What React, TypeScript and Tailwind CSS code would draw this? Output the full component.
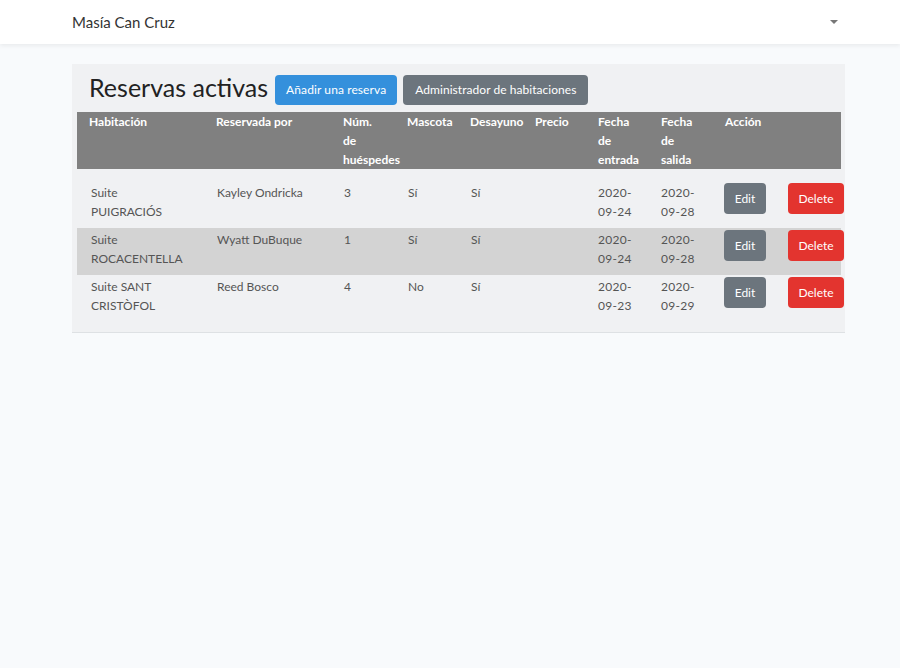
import React from "react";

const rows = [
  { hab: ["Suite", "PUIGRACIÓS"], por: "Kayley Ondricka", n: "3", m: "Sí", d: "Sí", p: "", e: ["2020-", "09-24"], s: ["2020-", "09-28"] },
  { hab: ["Suite", "ROCACENTELLA"], por: "Wyatt DuBuque", n: "1", m: "Sí", d: "Sí", p: "", e: ["2020-", "09-24"], s: ["2020-", "09-28"] },
  { hab: ["Suite SANT", "CRISTÒFOL"], por: "Reed Bosco", n: "4", m: "No", d: "Sí", p: "", e: ["2020-", "09-23"], s: ["2020-", "09-29"] },
];

const widths = ["w-[127px]", "w-[127px]", "w-[64px]", "w-[63px]", "w-[65px]", "w-[63px]", "w-[63px]", "w-[64px]", "w-[63px]", "w-[65px]"];

const headers: string[][] = [
  ["Habitación"],
  ["Reservada por"],
  ["Núm.", "de", "huéspedes"],
  ["Mascota"],
  ["Desayuno"],
  ["Precio"],
  ["Fecha", "de", "entrada"],
  ["Fecha", "de", "salida"],
  ["Acción"],
  [""],
];

export default function App() {
  return (
    <div className="min-h-[668px] bg-[#f8fafc] text-[#555]" style={{ fontFamily: "Lato, 'Noto Sans', sans-serif" }}>
      <nav className="h-[44px] bg-white shadow-[0_2px_4px_rgba(0,0,0,0.06)] flex items-center justify-between pl-[72px] pr-[62px]">
        <span className="text-[15px] text-[#333]">Masía Can Cruz</span>
        <span className="w-0 h-0 border-l-[4px] border-r-[4px] border-t-[4px] border-l-transparent border-r-transparent border-t-[#777]" />
      </nav>
      <div className="pt-[20px] pl-[72px]">
        <div className="w-[773px] bg-[#f0f1f3] border-b border-[#dee1e4] pt-[11px] pb-[10px] pl-[5px]">
          <div className="flex items-center h-[30px] mb-[7px] pl-[12px] gap-[6px]">
            <h1 className="text-[25px] text-[#222] leading-none mr-[1px] mt-[-6px]">Reservas activas</h1>
            <button className="h-[30px] px-[11px] rounded-[4px] bg-[#3490dc] text-white text-[12px] tracking-[0.1px]">Añadir una reserva</button>
            <button className="h-[30px] px-[12px] rounded-[4px] bg-[#6c757d] text-white text-[12px] tracking-[0.05px]">Administrador de habitaciones</button>
          </div>
          <table className="border-collapse text-[12px] leading-[19px] table-fixed w-[764px]">
            <thead>
              <tr className="bg-[#808080] text-white align-top">
                {headers.map((h, i) => (
                  <th key={i} className={`${widths[i]} text-left font-bold pl-[12px] pr-[2px] h-[57px] align-top`}>
                    {h.map((l, j) => (
                      <div key={j}>{l}</div>
                    ))}
                  </th>
                ))}
              </tr>
            </thead>
            <tbody>
              <tr><td colSpan={10} className="h-[12px] p-0" /></tr>
              {rows.map((r, i) => (
                <tr key={i} className={`${i === 1 ? "bg-[#d3d3d3]" : ""} align-top h-[47px]`}>
                  <td className="pl-[14px] pt-[2px]">{r.hab[0]}<br />{r.hab[1]}</td>
                  <td className="pl-[13px] pt-[2px]">{r.por}</td>
                  <td className="pl-[13px] pt-[2px]">{r.n}</td>
                  <td className="pl-[13px] pt-[2px]">{r.m}</td>
                  <td className="pl-[13px] pt-[2px]">{r.d}</td>
                  <td className="pl-[12px] pt-[2px]">{r.p}</td>
                  <td className="pl-[12px] pt-[2px] tracking-[0.3px]">{r.e[0]}<br />{r.e[1]}</td>
                  <td className="pl-[12px] pt-[2px] tracking-[0.3px]">{r.s[0]}<br />{r.s[1]}</td>
                  <td className="pl-[11px] pt-[2px]">
                    <button className="h-[31px] w-[42px] rounded-[4px] bg-[#6c757d] text-white text-[12px]">Edit</button>
                  </td>
                  <td className="pl-[12px] pt-[2px] overflow-visible">
                    <button className="h-[31px] w-[56px] rounded-[4px] bg-[#e3342f] text-white text-[12px]">Delete</button>
                  </td>
                </tr>
              ))}
            </tbody>
          </table>
        </div>
      </div>
    </div>
  );
}
